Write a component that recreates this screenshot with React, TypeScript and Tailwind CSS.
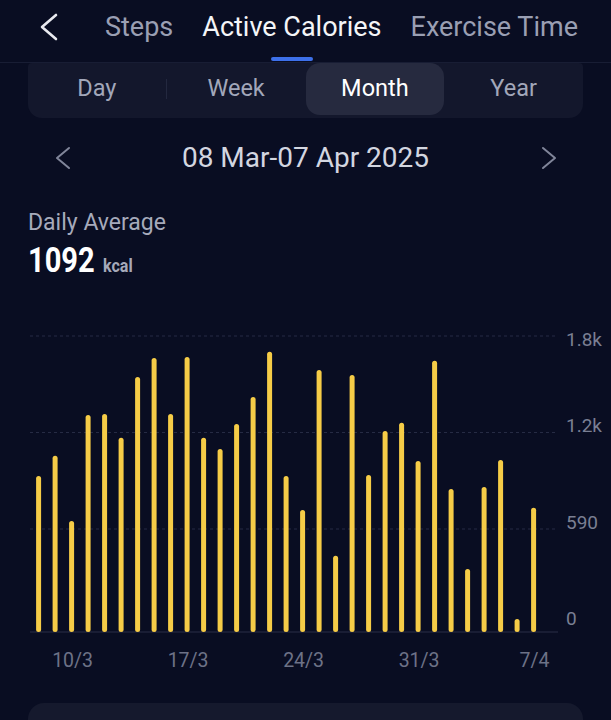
import React from "react";

const tops = [476, 455.7, 521, 415, 414, 437.7, 377, 358, 414, 357, 437.7, 449, 424, 397, 351.7, 476, 510, 370, 555.7, 375, 475, 431, 422.7, 461, 360.7, 489, 569, 487, 460, 619, 507.7];
const OFF = 300;
const BASE = 632 - OFF;
const cx = (i: number) => 38.6 + i * 16.5;

const xLabels = [
  { i: 2, t: "10/3" },
  { i: 9, t: "17/3" },
  { i: 16, t: "24/3" },
  { i: 23, t: "31/3" },
  { i: 30, t: "7/4" },
];

const yLabels = [
  { top: 30, t: "1.8k" },
  { top: 115.5, t: "1.2k" },
  { top: 213, t: "590" },
  { top: 309, t: "0" },
];

export default function App() {
  return (
    <div className="w-[611px] h-[720px] bg-[#090d22] overflow-hidden font-['Roboto',sans-serif]">
      {/* header */}
      <div className="h-[63px] border-b border-[#181d34] flex items-start">
        <svg width="20" height="30" viewBox="0 0 20 30" className="ml-[39px] mt-[12px] shrink-0">
          <path d="M17 3 L3 15 L17 27" fill="none" stroke="#e9eaf0" strokeWidth="2.6" strokeLinecap="round" strokeLinejoin="round" />
        </svg>
        <div className="flex gap-[29px] ml-[46px]">
          <div className="flex flex-col items-center">
            <span className="mt-[10px] text-[27px] leading-[34px] text-[#9a9fb3] whitespace-nowrap">Steps</span>
          </div>
          <div className="flex flex-col items-center">
            <span className="mt-[10px] text-[27px] leading-[34px] text-[#f4f5f8] whitespace-nowrap">Active Calories</span>
            <div className="mt-[13px] h-[4px] w-[42px] rounded-full bg-[#3d70ea]" />
          </div>
          <div className="flex flex-col items-center">
            <span className="mt-[10px] text-[27px] leading-[34px] text-[#9a9fb3] whitespace-nowrap">Exercise Time</span>
          </div>
        </div>
      </div>

      {/* segmented control */}
      <div className="mx-[28px] h-[55px] bg-[#13172c] rounded-b-[14px] rounded-t-[4px] flex pb-[3px]">
        <div className="flex-1 flex items-center">
          <span className="flex-1 text-center text-[23.5px] text-[#a2a7ba]">Day</span>
          <div className="w-px h-[20px] bg-[#23283f]" />
        </div>
        <div className="flex-1 flex items-center justify-center text-[23.5px] text-[#a2a7ba]">Week</div>
        <div className="flex-1 flex items-center justify-center text-[23.5px] text-white bg-[#262a3f] rounded-[14px]">Month</div>
        <div className="flex-1 flex items-center justify-center text-[23.5px] text-[#a2a7ba]">Year</div>
      </div>

      {/* date row */}
      <div className="h-[80px] flex items-center justify-between px-[54px]">
        <svg width="18" height="24" viewBox="0 0 18 24">
          <path d="M15 2 L3 12 L15 22" fill="none" stroke="#80859a" strokeWidth="2" strokeLinecap="round" strokeLinejoin="round" />
        </svg>
        <span className="text-[28px] leading-[34px] text-[#d3d6e0]">08 Mar-07 Apr 2025</span>
        <svg width="18" height="24" viewBox="0 0 18 24">
          <path d="M4 2 L16 12 L4 22" fill="none" stroke="#80859a" strokeWidth="2" strokeLinecap="round" strokeLinejoin="round" />
        </svg>
      </div>

      {/* daily average */}
      <div className="pl-[28px] mt-[11px] text-[23px] leading-[28px] text-[#a6aabb]">Daily Average</div>
      <div className="pl-[28px] mt-[6px] h-[35px] flex items-baseline">
        <span className="inline-block text-[35px] leading-[35px] font-bold text-white scale-x-[0.83] origin-left">1092</span>
        <span className="ml-[-5.5px] text-[17.5px] font-bold text-[#a5a9b9] scale-x-[0.92] origin-left inline-block">kcal</span>
      </div>

      {/* chart */}
      <div className="relative mt-[22px] h-[403px]">
        <svg width="611" height="403" viewBox="0 0 611 403" className="block">
          {[36, 132.5, 229].map((y) => (
            <line key={y} x1="30" x2="558" y1={y} y2={y} stroke="#262b44" strokeWidth="1" strokeDasharray="3 3" />
          ))}
          <line x1="30" x2="558" y1={BASE} y2={BASE} stroke="#2a2f47" strokeWidth="1.2" />
          {tops.map((t, i) => (
            <rect key={i} x={cx(i) - 2.5} y={t - OFF} width="5" height={BASE - (t - OFF)} rx="2.5" fill="#f6cc47" />
          ))}
        </svg>
        {yLabels.map((l) => (
          <span key={l.t} className="absolute left-[566px] text-[19px] leading-[20px] text-[#7a7f93]" style={{ top: l.top }}>
            {l.t}
          </span>
        ))}
        {xLabels.map((l) => (
          <span key={l.t} className="absolute top-[351px] w-[60px] text-center text-[19.5px] leading-[20px] text-[#6d7287]" style={{ left: cx(l.i) + 1 - 30 }}>
            {l.t}
          </span>
        ))}
      </div>

      {/* bottom card */}
      <div className="mx-[28px] h-[40px] rounded-t-[16px] bg-[#15192d]" />
    </div>
  );
}
